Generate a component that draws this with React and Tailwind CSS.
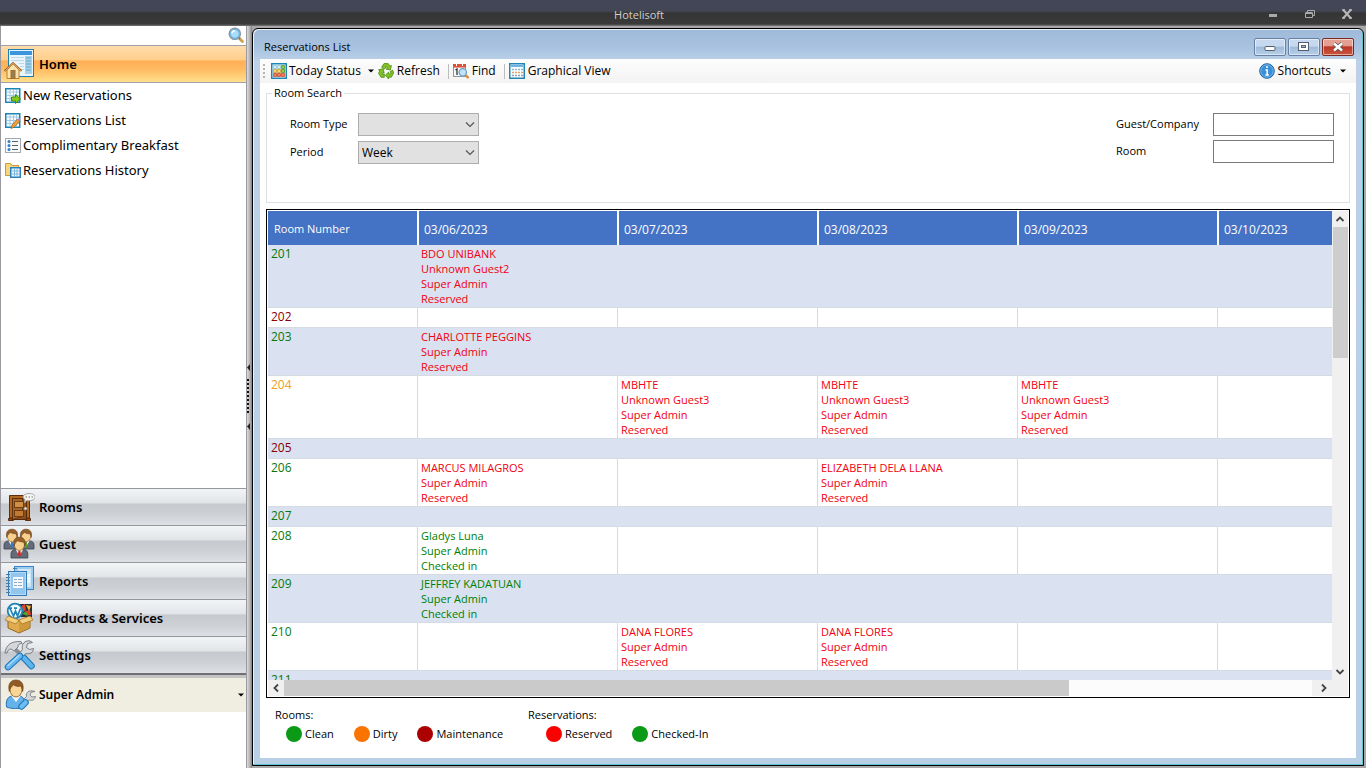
const sideFont = "font-['Noto_Sans','Open_Sans',sans-serif]";
const mainFont = "font-['Open_Sans','Noto_Sans',sans-serif]";

const dates = ['03/06/2023', '03/07/2023', '03/08/2023', '03/09/2023', '03/10/2023'];

const roomColors = {
    clean: 'text-[#087808]',
    dirty: 'text-[#f0a020]',
    maintenance: 'text-[#8b0000]',
};

const staff = 'Super Admin';

const rooms = [
    { number: '201', status: 'clean', bookings: { 0: ['BDO UNIBANK', 'Unknown Guest2', staff, 'Reserved'] } },
    { number: '202', status: 'maintenance', bookings: {} },
    { number: '203', status: 'clean', bookings: { 0: ['CHARLOTTE PEGGINS', staff, 'Reserved'] } },
    {
        number: '204',
        status: 'dirty',
        bookings: {
            1: ['MBHTE', 'Unknown Guest3', staff, 'Reserved'],
            2: ['MBHTE', 'Unknown Guest3', staff, 'Reserved'],
            3: ['MBHTE', 'Unknown Guest3', staff, 'Reserved'],
        },
    },
    { number: '205', status: 'maintenance', bookings: {} },
    {
        number: '206',
        status: 'clean',
        bookings: {
            0: ['MARCUS MILAGROS', staff, 'Reserved'],
            2: ['ELIZABETH DELA LLANA', staff, 'Reserved'],
        },
    },
    { number: '207', status: 'clean', bookings: {} },
    { number: '208', status: 'clean', bookings: { 0: ['Gladys Luna', staff, 'Checked in'] } },
    { number: '209', status: 'clean', bookings: { 0: ['JEFFREY KADATUAN', staff, 'Checked in'] } },
    {
        number: '210',
        status: 'clean',
        bookings: {
            1: ['DANA FLORES', staff, 'Reserved'],
            2: ['DANA FLORES', staff, 'Reserved'],
        },
    },
    { number: '211', status: 'clean', bookings: {} },
];

/* ---------- icons ---------- */

function SearchIcon() {
    return (
        <svg width="16" height="16" viewBox="0 0 16 16">
            <path d="M11 11l3.4 3.4" stroke="#c9a24a" strokeWidth="2.8" strokeLinecap="round" />
            <path d="M10 10l2 2" stroke="#777" strokeWidth="2" />
            <circle cx="6.8" cy="6.8" r="5.6" fill="#a9dcf6" stroke="#8795a8" strokeWidth="1.4" />
            <circle cx="6.8" cy="6.8" r="4.4" fill="none" stroke="#5fb0e2" />
            <path d="M4 6.5a3 3 0 0 1 3-2.7" stroke="#fff" strokeWidth="1.4" fill="none" />
        </svg>
    );
}

function HomeIcon() {
    return (
        <svg width="32" height="32" viewBox="0 0 32 32">
            <rect x="5.5" y="1.5" width="25" height="27" fill="#e9f5fc" stroke="#1d7fb0" />
            <rect x="7" y="3" width="22" height="4" fill="#3b95dd" />
            <path d="M8 9.5h13M8 12.5h13M16 15.5h5M17 18.5h4M18 21.5h3" stroke="#bcd9ea" />
            <rect x="22" y="8" width="7" height="18" fill="#a9d2e8" />
            <path d="M23 10h5M23 13h5M23 16h5M23 19h5M23 22h5" stroke="#5da6cb" />
            <path d="M4 22v8.5h12V22l-6-6z" fill="#fbe3b0" stroke="#b78136" />
            <path d="M1.500 23l8.500-8 8.500 8" fill="none" stroke="#a96b2a" strokeWidth="2" />
            <path d="M2.500 22.500l7.500-7 7.500 7" fill="none" stroke="#f3c98a" strokeWidth=".8" />
            <rect x="8" y="22.500" width="4" height="8" fill="#8e8050" stroke="#b06a24" />
        </svg>
    );
}

function SheetBase() {
    return (
        <>
            <rect x=".75" y=".75" width="14" height="13.500" fill="#f5fbff" stroke="#1d86b5" strokeWidth="1.500" />
            <path d="M2 4h12M2 7.500h12M2 10.500h12M5 2v11M8.500 2v11M11.500 2v11" stroke="#a3cbdf" />
        </>
    );
}

function NewReservationIcon() {
    return (
        <svg width="16" height="16" viewBox="0 0 16 16">
            <SheetBase />
            <path d="M6.500 9h4V6.500l5 4.500-5 4.500V13h-4z" fill="#84cc16" stroke="#3f8a12" />
        </svg>
    );
}

function ReservationListIcon() {
    return (
        <svg width="16" height="16" viewBox="0 0 16 16">
            <SheetBase />
            <path d="M6 15.500l1-3.500 5.500-6 2.300 2.300-5.800 6z" fill="#f0a038" stroke="#9a5d1a" strokeWidth=".7" />
            <path d="M12.700 6l1.200-1.200 2 2-1.200 1.200z" fill="#b58bc9" />
        </svg>
    );
}

function BreakfastIcon() {
    return (
        <svg width="16" height="16" viewBox="0 0 16 16">
            <rect x=".5" y=".5" width="15" height="14" fill="#fafbfc" stroke="#a0a8b0" />
            <path d="M7 3.500h6M7 7.500h6M7 11.500h6" stroke="#56616b" />
            <g fill="#2f7fd0">
                <circle cx="4" cy="3.500" r="1.500" />
                <circle cx="4" cy="7.500" r="1.500" />
                <circle cx="4" cy="11.500" r="1.500" />
            </g>
        </svg>
    );
}

function HistoryIcon() {
    return (
        <svg width="16" height="16" viewBox="0 0 16 16">
            <path d="M.5 12.500v-12h5l1.500 2h6.500v10z" fill="#f8d77c" stroke="#c99a37" />
            <rect x="5.750" y="4.750" width="9.500" height="9.500" fill="#f3faff" stroke="#2a7fbd" strokeWidth="1.500" />
            <path d="M7 8h7M7 11h7M9.500 6v7.500M12 6v7.500" stroke="#7db4da" />
        </svg>
    );
}

function DoorIcon() {
    return (
        <svg width="32" height="32" viewBox="0 0 32 32">
            <path d="M6.500 27V4.500h20V27z" fill="#b0661f" stroke="#5e2f0c" />
            <path d="M5.500 27.500h5v2h-5zM22.500 27.500h5v2h-5z" fill="#8b4a15" stroke="#5e2f0c" />
            <rect x="9.500" y="7.500" width="14" height="21" fill="#8e4e18" stroke="#55290a" />
            <path d="M9.500 7.500h10v18l-10 3z" fill="#a86425" stroke="#55290a" strokeWidth=".7" />
            <rect x="11.500" y="10.500" width="9" height="6" fill="#cf9046" stroke="#6e3b12" />
            <rect x="11.500" y="19.500" width="9" height="6" fill="#c17a32" stroke="#6e3b12" />
            <circle cx="22.500" cy="17.500" r="1.600" fill="#e8e3d8" stroke="#777" strokeWidth=".5" />
            <path d="M21.500 12l.5-3.500c-4-2.500-1-6 4-6 7 0 8 5.500 3 6.800-2 .6-4 .4-5.200.2z" fill="#f4f4f2" stroke="#a5a5a5" />
            <path d="M22.500 6h1.500M25.500 6h1.500M28.500 6h1.500" stroke="#777" />
        </svg>
    );
}

function Person({ tie }) {
    return (
        <>
            <path d="M0 20v-4c0-2.500 2-4 4-4h8c2 0 4 1.500 4 4v4z" fill="#636c78" stroke="#3c434c" strokeWidth=".8" />
            <path d="M4.500 12L8 18l3.500-6z" fill="#eef5fa" />
            <path d="M7.200 12.500h1.600l.8 4.500L8 19l-1.600-2z" fill={tie} />
            <ellipse cx="8" cy="7" rx="4.800" ry="5.800" fill="#f7cf8e" stroke="#a86f2d" strokeWidth=".7" />
            <path d="M2.800 8.500C1.300 2.500 4.500.2 8 .2s6.700 2.300 5.200 8.300L12.400 5C10 4.800 7.500 4.300 6.200 3.300 5.800 4.800 3.600 5.400 2.800 8.500z" fill="#96602a" stroke="#5d3612" strokeWidth=".5" />
        </>
    );
}

function GuestIcon() {
    return (
        <svg width="32" height="32" viewBox="0 0 32 32">
            <g transform="translate(1 1)"><Person tie="#3a78c8" /></g>
            <g transform="translate(15 1)"><Person tie="#58a02c" /></g>
            <g transform="translate(8 9) scale(1.050)"><Person tie="#d42a2a" /></g>
        </svg>
    );
}

function ReportsIcon() {
    return (
        <svg width="32" height="32" viewBox="0 0 32 32">
            <rect x="11.500" y="1.500" width="19" height="23" fill="#9fcdf0" stroke="#3c86c4" />
            <rect x="15" y="4" width="13" height="18" fill="#cfe8f9" />
            <path d="M24 10.500h3M24 13.500h3M24 16.500h3" stroke="#fff" strokeWidth="2" />
            <rect x="5.500" y="6.500" width="18" height="24" fill="#b5daf6" stroke="#3378b8" />
            <rect x="8" y="8" width="14" height="21" fill="#93c6ee" />
            <rect x="10" y="12" width="10" height="11" fill="#f4faff" />
            <path d="M11 14.500h3M15 14.500h4M11 17.500h3M15 17.500h4M11 20.500h3M15 20.500h4" stroke="#8fabc2" />
            <path d="M3 9.500h4M3 12.500h4M3 15.500h4M3 18.500h4M3 21.500h4M3 24.500h4M3 27.500h4M10 3.500h4" stroke="#4a7da6" strokeWidth="1.200" />
        </svg>
    );
}

function ProductsIcon() {
    return (
        <svg width="32" height="32" viewBox="0 0 32 32">
            <path d="M16 2h13v13H16z" fill="#2b2f36" />
            <path d="M17 5l5-3 1 6-4 3zM23 9l4-1 1 5h-5z" fill="#e2432a" />
            <path d="M23 3l5 1-2 5z" fill="#f4b52a" />
            <path d="M19 12l4-3 2 5z" fill="#4fa52a" />
            <circle cx="12" cy="9" r="7.300" fill="#f3fafe" stroke="#2183b4" strokeWidth="1.800" />
            <path d="M7 6.500L10.500 14l2-5 2 5 3-7.500M6 6.200h3M11 6.200h3" fill="none" stroke="#2183b4" strokeWidth="1.700" />
            <path d="M5 15l11 4 11-4v11l-11 5-11-5z" fill="#dfad50" stroke="#966518" />
            <path d="M16 19v11.500l10.500-5V15z" fill="#cf9a3c" />
            <path d="M5 14l-3 4 11 4 3-4zM27 14l3 4-11 4-3-4z" fill="#f2cf7c" stroke="#a9762a" strokeWidth=".8" />
        </svg>
    );
}

function SettingsIcon() {
    return (
        <svg width="32" height="32" viewBox="0 0 32 32">
            <path d="M12 10l9 9" stroke="#8b8f94" strokeWidth="4" />
            <path d="M2 14C3 6 8 2 18 2.500l1 2c-3 0-4 1-4 3.500l-4 4-3-2c-2 0-3 1-4 4z" fill="#d4d6d9" stroke="#7a7e83" />
            <path d="M21 19l7.500 8" stroke="#1c73b8" strokeWidth="6.500" strokeLinecap="round" />
            <path d="M21 19l7.500 8" stroke="#5db5ee" strokeWidth="4.500" strokeLinecap="round" />
            <path d="M29.500 3.500l-5 1-1 4 3 2 4-1c0 4-4 6-7.500 5l-5 4-3-3 4.500-5C18 5 22 1 27 2z" fill="#d6d9db" stroke="#7a7e83" />
            <path d="M17 17L5 28" stroke="#1c73b8" strokeWidth="6.500" strokeLinecap="round" />
            <path d="M17 17L5 28" stroke="#63b9f0" strokeWidth="4.500" strokeLinecap="round" />
            <path d="M16 16.500L5 26.500" stroke="#b5e0fb" strokeWidth="1.200" strokeLinecap="round" />
        </svg>
    );
}

function AdminIcon() {
    return (
        <svg width="32" height="32" viewBox="0 0 32 32">
            <path d="M1.500 28c-1-8 2-11 7-11h5c5 0 7 4 6 11-5 2-13 2-18 0z" fill="#64b3ea" stroke="#2473b5" />
            <path d="M6.500 17l4.500 6 4.500-6z" fill="#f5fafd" />
            <ellipse cx="11" cy="10.500" rx="6" ry="7.500" fill="#f9d596" stroke="#a8692a" />
            <path d="M4.300 12.500C2.300 4 6.500 1 11 1s8.700 3 6.700 11.500L16.500 7C12.500 8 9.500 7 8 5.500 7.500 8 5 8 4.300 12.500z" fill="#925a26" stroke="#643a13" strokeWidth=".6" />
            <path d="M30 12.500l-4 .8-1 2.700 2 2 3.500-.5c-.5 3.500-3.500 4.500-6 3.500l-3 2.500-3-3 3-3c-1-4 2.500-7 8.500-5z" fill="#d3d6d8" stroke="#7a7e83" strokeWidth=".9" />
            <path d="M20.500 23.500l-4 4" stroke="#1c73b8" strokeWidth="6.500" strokeLinecap="round" />
            <path d="M20.500 23.500l-4 4" stroke="#6cbef2" strokeWidth="4.500" strokeLinecap="round" />
        </svg>
    );
}

function TodayStatusIcon() {
    return (
        <svg width="16" height="16" viewBox="0 0 16 16">
            <rect x=".75" y=".75" width="14.500" height="14.500" fill="#fff" stroke="#1d86b5" strokeWidth="1.500" />
            <g strokeWidth=".7">
                <path d="M2.500 2.500h3v3h-3zM6.500 2.500h3v3h-3z" fill="#d3eef6" stroke="#7cc0c8" />
                <path d="M10.500 2.500h3v3h-3zM10.500 6.500h3v3h-3z" fill="#8fd04a" stroke="#3f8a1a" />
                <path d="M2.500 6.500h3v3h-3zM6.500 6.500h3v3h-3z" fill="#fbd870" stroke="#c08a24" />
                <path d="M2.500 10.500h3v3h-3zM6.500 10.500h3v3h-3zM10.500 10.500h3v3h-3z" fill="#f4805a" stroke="#b83a1c" />
            </g>
        </svg>
    );
}

function RefreshIcon() {
    return (
        <svg width="16" height="16" viewBox="0 0 16 16" fill="#84c225" stroke="#4a8a12" strokeWidth=".8">
            <path d="M3.600 4.200L6 .6h4.200l1.700 2.600 1.500-.8-1 4.600-4.400-.9 1.500-.9L8 3.200 6.700 6z" />
            <path d="M12 8.700l2.700-1.600.9 2.900-2.300 4.200h-2.600V16L7.300 12.300l3.400-3.200v1.900h1.500l.9-1z" />
            <path d="M6.300 14.300H3L.5 10.300 1.900 7.700.5 6.800l4.600-1 1.100 4.300-1.500-.8-.9 1.700h2.500z" />
        </svg>
    );
}

function FindIcon() {
    return (
        <svg width="16" height="16" viewBox="0 0 16 16">
            <rect x=".5" y="1.500" width="12" height="12" fill="#f7f8fa" stroke="#8b97a5" />
            <path d="M0 1h13v3.500H0z" fill="#dd5034" />
            <path d="M3.500 0v3M9.500 0v3" stroke="#fff" />
            <path d="M2.500 7L4 6v6" fill="none" stroke="#333" strokeWidth="1.300" />
            <path d="M13 12.500l1.800 1.800" stroke="#e18a35" strokeWidth="2.400" strokeLinecap="round" />
            <circle cx="9.800" cy="9.300" r="3.700" fill="#bfe3f8" stroke="#6c9cc4" strokeWidth="1.200" />
        </svg>
    );
}

function GraphicalIcon() {
    return (
        <svg width="16" height="16" viewBox="0 0 16 16">
            <rect x=".75" y=".75" width="14.500" height="14.500" fill="#fff" stroke="#1d86b5" strokeWidth="1.500" />
            <path d="M2 3h12" stroke="#6cb4e4" strokeWidth="2" />
            <path d="M3 6.500h11" stroke="#8ab4d8" strokeWidth="1.500" strokeDasharray="2 1" />
            <path d="M3 9.500h11" stroke="#d8a36a" strokeWidth="1.500" strokeDasharray="2 1" />
            <path d="M3 12.500h11" stroke="#8da0b5" strokeWidth="1.500" strokeDasharray="2 1" />
        </svg>
    );
}

function InfoIcon() {
    return (
        <svg width="16" height="16" viewBox="0 0 16 16">
            <circle cx="8" cy="8" r="7.300" fill="#3a8fd6" stroke="#2263a0" />
            <circle cx="8" cy="8" r="6.200" fill="none" stroke="#8cc4f0" strokeWidth=".7" />
            <path d="M8 3v2M6.500 7H8.200v5M6.300 12h3.600" fill="none" stroke="#fff" strokeWidth="1.500" />
        </svg>
    );
}

function Caret() {
    return (
        <svg width="6" height="4" viewBox="0 0 6 4" className="shrink-0">
            <path d="M0 .5h6l-3 3z" fill="#000" />
        </svg>
    );
}

function Chevron({ d }) {
    return (
        <svg width="10" height="10" viewBox="0 0 10 10" fill="none" stroke="#444" strokeWidth="1.800">
            <path d={d} />
        </svg>
    );
}

/* ---------- frame ---------- */

function TitleBar() {
    const button = 'flex h-[26px] w-[37px] items-center justify-center pt-[2px]';
    return (
        <header className={`flex h-[26px] shrink-0 items-center bg-[linear-gradient(#424656_0,#434655_11px,#353535_13px,#3a3a3a_24px,#777_26px)] text-[11px] text-[#d0d0d0] ${mainFont}`}>
            <h1 className="flex-1 pt-[5px] pl-6 text-center">Hotelisoft</h1>
            <div className="flex pr-px">
                <button aria-label="Minimize" className={button}>
                    <svg width="10" height="10" viewBox="0 0 10 10"><path d="M1 6.500h8" stroke="#aaa" strokeWidth="3" /></svg>
                </button>
                <button aria-label="Restore" className={button}>
                    <svg width="10" height="10" viewBox="0 0 10 10" fill="none" stroke="#aaa">
                        <path d="M2.500 3V1.500h7v5H8" />
                        <path d="M.5 4h7v4.500h-7z" />
                        <path d="M.5 4h7" strokeWidth="2" />
                    </svg>
                </button>
                <button aria-label="Close" className={button}>
                    <svg width="12" height="10" viewBox="0 0 12 10">
                        <path d="M2 .5l8 9M10 .5l-8 9" stroke="#b5b5b5" strokeWidth="2.200" />
                        <path d="M1 1h3M8 1h3M1 9h3M8 9h3" stroke="#b5b5b5" strokeWidth="1.500" />
                    </svg>
                </button>
            </div>
        </header>
    );
}

const homeLinks = [
    { label: 'New Reservations', icon: <NewReservationIcon /> },
    { label: 'Reservations List', icon: <ReservationListIcon /> },
    { label: 'Complimentary Breakfast', icon: <BreakfastIcon /> },
    { label: 'Reservations History', icon: <HistoryIcon /> },
];

const sections = [
    { label: 'Rooms', icon: <DoorIcon /> },
    { label: 'Guest', icon: <GuestIcon /> },
    { label: 'Reports', icon: <ReportsIcon /> },
    { label: 'Products & Services', icon: <ProductsIcon /> },
    { label: 'Settings', icon: <SettingsIcon /> },
];

function Sidebar() {
    return (
        <aside className={`flex w-[247px] shrink-0 flex-col border-x border-[#9a9aa0] bg-white text-[13px] text-black ${sideFont}`}>
            <div className="flex h-[19px] items-start justify-end pt-px pr-[2px]">
                <button aria-label="Search"><SearchIcon /></button>
            </div>
            <button className="flex h-[38px] items-center gap-1 border-y border-[#a0a0a8] bg-[linear-gradient(#ffdcaa_0%,#ffcf8c_38%,#ffae55_42%,#ffbb62_65%,#ffe08c_100%)] pl-[2px] font-semibold">
                <HomeIcon />
                <span className="pt-[2px]">Home</span>
            </button>
            <nav className="flex-1">
                {homeLinks.map((link) => (
                    <a key={link.label} href="#" className="flex h-[25px] items-center gap-[2px] pl-1">
                        {link.icon}
                        {link.label}
                    </a>
                ))}
            </nav>
            {sections.map((section) => (
                <button
                    key={section.label}
                    className="flex h-[37px] items-center gap-1 border-t border-[#94989c] bg-[linear-gradient(#f2f4f6_0%,#e2e5e8_38%,#c6cace_42%,#cdd1d5_70%,#dde0e4_100%)] pl-[2px] font-semibold"
                >
                    {section.icon}
                    <span className="pt-[2px]">{section.label}</span>
                </button>
            ))}
            <div className="h-[95px] border-t-2 border-[#707074]">
                <button className="flex h-[37px] w-full items-center gap-[2px] border-t-3 border-[#c4c4c4] bg-[#efeee0] pr-[2px] pl-1 text-xs font-semibold">
                    <AdminIcon />
                    <span className="flex-1 text-left">Super Admin</span>
                    <Caret />
                </button>
            </div>
        </aside>
    );
}

function Splitter() {
    return (
        <div className="flex w-[5px] shrink-0 flex-col items-center justify-center bg-[linear-gradient(90deg,#dcdcdc,#b0b0b0_60%,#808080)]">
            <svg width="5" height="66" viewBox="0 0 5 66">
                <path d="M3 0v7L0 3.500zM3 59v7l-3-3.500z" fill="#222" />
                <path d="M1 15v36" stroke="#111" strokeWidth="2" strokeDasharray="2 2" />
            </svg>
        </div>
    );
}

function WindowButtons() {
    const base = 'flex h-[18px] w-[32px] items-center justify-center rounded-[2px] border shadow-[inset_0_0_0_1px_rgba(255,255,255,0.5)]';
    const blue = 'border-[#6681a5] bg-[linear-gradient(#c6d9ee_45%,#9fbbd9_50%,#b7cfe8)]';
    return (
        <div className="flex gap-[2px]">
            <button aria-label="Minimize window" className={`${base} ${blue}`}>
                <svg width="12" height="10" viewBox="0 0 12 10"><rect x="1" y="4.500" width="10" height="4" rx="1" fill="#fff" stroke="#555f70" /></svg>
            </button>
            <button aria-label="Maximize window" className={`${base} ${blue}`}>
                <svg width="12" height="10" viewBox="0 0 12 10" stroke="#555f70">
                    <rect x=".5" y=".5" width="10" height="8" fill="#fff" />
                    <rect x="3.500" y="3.500" width="4" height="2" fill="#9fbbd9" />
                </svg>
            </button>
            <button aria-label="Close window" className={`${base} border-[#7a2a22] bg-[linear-gradient(#e5a094_40%,#bc3826_50%,#c9563f)]`}>
                <svg width="12" height="10" viewBox="0 0 12 10">
                    <path d="M2 1.500l8 7M10 1.500l-8 7" stroke="#555" strokeWidth="4" />
                    <path d="M2 1.500l8 7M10 1.500l-8 7" stroke="#fff" strokeWidth="2.400" />
                </svg>
            </button>
        </div>
    );
}

function Toolbar() {
    const separator = 'mr-1 ml-2 h-[15px] w-px bg-[#bdbdbd]';
    return (
        <div className="flex h-6 items-center bg-[linear-gradient(#fdfdfd,#f3f3f3)] pl-[3px] text-xs">
            <svg width="2" height="14" viewBox="0 0 2 14"><path d="M1 0v14" stroke="#b5b5b5" strokeWidth="2" strokeDasharray="2 2" /></svg>
            <button className="ml-[6px] flex items-center gap-[2px]"><TodayStatusIcon />Today Status</button>
            <button aria-label="Today Status options" className="ml-[7px]"><Caret /></button>
            <button className="ml-1 flex items-center gap-[3px]"><RefreshIcon />Refresh</button>
            <span className={separator} />
            <button className="flex items-center gap-[3px]"><FindIcon />Find</button>
            <span className={separator} />
            <button className="flex items-center gap-[3px]"><GraphicalIcon />Graphical View</button>
            <button className="mr-[10px] ml-auto flex items-center gap-[3px]">
                <InfoIcon />
                Shortcuts
                <span className="ml-[6px]"><Caret /></span>
            </button>
        </div>
    );
}

function SelectBox({ id, options }) {
    return (
        <div className="grid items-center">
            <select id={id} className="col-start-1 row-start-1 h-[23px] w-[121px] appearance-none border border-[#adadad] bg-[#e1e1e1] pl-[3px] text-[12px]">
                {options.map((option) => <option key={option}>{option}</option>)}
            </select>
            <svg width="10" height="6" viewBox="0 0 10 6" className="pointer-events-none col-start-1 row-start-1 mr-1 justify-self-end">
                <path d="M1 .5l4 4 4-4" fill="none" stroke="#555" strokeWidth="1.200" />
            </svg>
        </div>
    );
}

function RoomSearch() {
    const input = 'h-[23px] w-[121px] border border-[#7a7a7a] bg-white px-1';
    return (
        <fieldset className="mx-[6px] mt-[2px] flex justify-between border border-[#dce2e2] pt-3 pr-[15px] pb-[38px] pl-[23px] text-[11px]">
            <legend className="-ml-[18px] h-4 px-[2px] leading-4">Room Search</legend>
            <div className="grid grid-cols-[68px_auto] items-center gap-y-[5px]">
                <label htmlFor="room-type">Room Type</label>
                <SelectBox id="room-type" options={['']} />
                <label htmlFor="period">Period</label>
                <SelectBox id="period" options={['Week', 'Month']} />
            </div>
            <div className="grid grid-cols-[97px_auto] content-start items-center gap-y-1">
                <label htmlFor="guest">Guest/Company</label>
                <input id="guest" type="text" className={input} />
                <label htmlFor="room">Room</label>
                <input id="room" type="text" className={input} />
            </div>
        </fieldset>
    );
}

function ReservationTable() {
    return (
        <table className="w-[1150px] table-fixed border-separate border-spacing-0 text-left text-[11px] leading-[15px]">
            <thead>
                <tr className="h-[34px] bg-[#4472c4] text-white">
                    <th scope="col" className="w-[150px] border-r border-white pl-[6px] font-normal">Room Number</th>
                    {dates.map((date) => (
                        <th key={date} scope="col" className="w-[200px] border-x border-white pt-[2px] pl-[5px] text-xs leading-[15px] font-normal">{date}</th>
                    ))}
                </tr>
            </thead>
            <tbody>
                {rooms.map((room) => (
                    <tr key={room.number} className="group h-5 odd:bg-[#dae2f2] even:bg-white">
                        <th scope="row" className={`border-r border-b border-[#d6dae2] pt-px pb-px pl-[3px] align-top text-xs leading-[15px] font-normal group-odd:border-r-[#dae2f2] ${roomColors[room.status]}`}>
                            {room.number}
                        </th>
                        {dates.map((date, i) => {
                            const lines = room.bookings[i] || [];
                            const color = lines.includes('Checked in') ? 'text-[#008000]' : 'text-[#f0000c]';
                            return (
                                <td key={date} className={`border-r border-b border-[#d6dae2] pt-px pb-px pl-[3px] align-top group-odd:border-r-[#dae2f2] ${color}`}>
                                    {lines.map((line) => <div key={line}>{line}</div>)}
                                </td>
                            );
                        })}
                    </tr>
                ))}
            </tbody>
        </table>
    );
}

function ReservationGrid() {
    return (
        <div className="mx-[6px] mt-[6px] grid min-h-0 flex-1 grid-cols-[minmax(0,1fr)_16px] grid-rows-[minmax(0,1fr)_16px] border border-black bg-white p-px">
            <div className="overflow-hidden">
                <ReservationTable />
            </div>
            <div className="flex min-h-0 flex-col bg-[#f0f0f0]">
                <button aria-label="Scroll up" className="flex h-4 items-center justify-center"><Chevron d="M1.500 7L5 3.500 8.500 7" /></button>
                <div className="min-h-0 flex-1">
                    <div className="ml-px h-[30%] bg-[#cdcdcd]" />
                </div>
                <button aria-label="Scroll down" className="flex h-4 items-center justify-center"><Chevron d="M1.500 3L5 6.500 8.500 3" /></button>
            </div>
            <div className="flex bg-[#f0f0f0]">
                <button aria-label="Scroll left" className="flex w-4 items-center justify-center"><Chevron d="M7 1.500L3.500 5 7 8.500" /></button>
                <div className="flex-1 bg-[#fcfcfc]">
                    <div className="h-full w-[76.4%] bg-[#cacaca]" />
                </div>
                <button aria-label="Scroll right" className="flex w-5 items-center justify-end pr-[3px]"><Chevron d="M3 1.500L6.500 5 3 8.500" /></button>
            </div>
            <div className="bg-[#f0f0f0]" />
        </div>
    );
}

function Dot({ color, label }) {
    return (
        <li className="flex items-center gap-[3px]">
            <span className={`size-4 rounded-full ${color}`} />
            {label}
        </li>
    );
}

function Legend() {
    return (
        <footer className="flex h-[60px] shrink-0 pt-[9px] pl-[15px] text-[11px] leading-4">
            <div className="w-[253px]">
                <h3>Rooms:</h3>
                <ul className="mt-[3px] flex gap-5 pl-[11px]">
                    <Dot color="bg-[#0a9a16]" label="Clean" />
                    <Dot color="bg-[#f97400]" label="Dirty" />
                    <Dot color="bg-[#aa0000]" label="Maintenance" />
                </ul>
            </div>
            <div>
                <h3>Reservations:</h3>
                <ul className="mt-[3px] flex gap-5 pl-[18px]">
                    <Dot color="bg-[#fb0000]" label="Reserved" />
                    <Dot color="bg-[#0a9a16]" label="Checked-In" />
                </ul>
            </div>
        </footer>
    );
}

export default function App() {
    return (
        <div className="flex h-screen flex-col overflow-hidden bg-white">
            <TitleBar />
            <div className="flex min-h-0 flex-1">
                <Sidebar />
                <Splitter />
                <div className="flex min-w-0 flex-1 bg-[#a8a8a8] pt-[2px] pr-[2px] pb-[2px]">
                    <section className={`flex min-w-0 flex-1 flex-col rounded-t-md border border-black bg-[linear-gradient(#9fb9d8_0,#a9c3e0_20px,#bcd1e8_32px,#b9cfe6)] px-[6px] pb-[7px] text-black shadow-[inset_-1px_-1px_0_#5fc3cf,inset_1px_1px_0_#e8f2fa] ${mainFont}`}>
                        <div className="flex h-[30px] shrink-0 items-center justify-between pt-[6px] pr-[3px] pl-[5px]">
                            <h2 className="text-[11px]">Reservations List</h2>
                            <WindowButtons />
                        </div>
                        <main className="mx-px flex min-h-0 flex-1 flex-col bg-white">
                            <Toolbar />
                            <RoomSearch />
                            <ReservationGrid />
                            <Legend />
                        </main>
                    </section>
                </div>
            </div>
        </div>
    );
}
